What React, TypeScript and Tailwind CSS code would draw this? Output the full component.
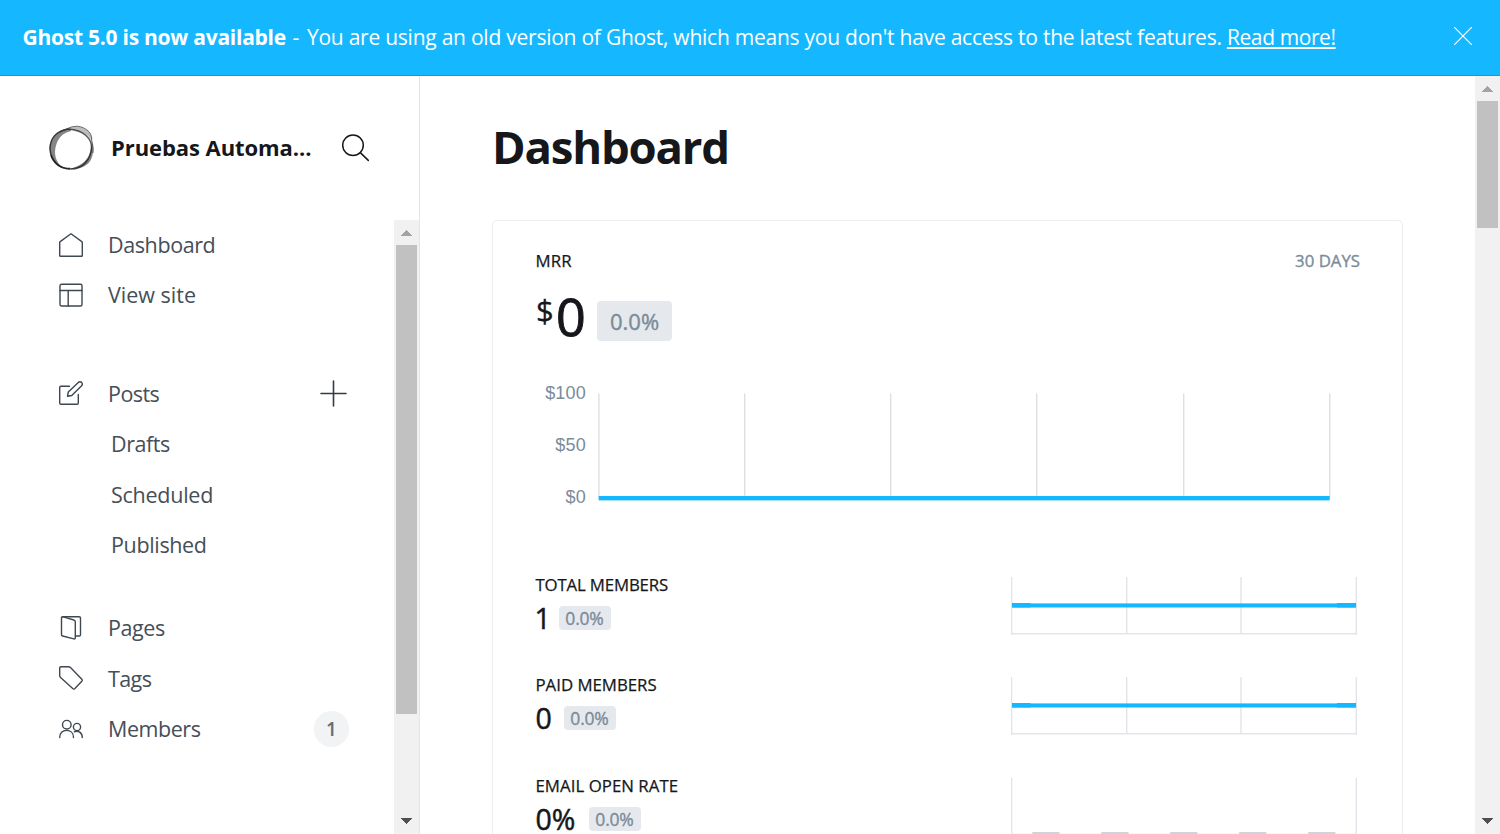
import type { ReactNode } from 'react';

function Icon({ className = '', children }: { className?: string; children: ReactNode }) {
  return (
    <svg
      width="24"
      height="24"
      viewBox="0 0 24 24"
      fill="none"
      stroke="#3f4750"
      strokeWidth="1.4"
      strokeLinecap="round"
      strokeLinejoin="round"
      className={`shrink-0 ${className}`}
    >
      {children}
    </svg>
  );
}

const navText = 'whitespace-nowrap text-[21.5px] leading-[30px] text-[#464e57]';

function NavItem({ icon, label, labelClass, children }: { icon: ReactNode; label: string; labelClass: string; children?: ReactNode }) {
  return (
    <li className="flex h-[50.4px] items-center pl-[59px] pr-[45px]">
      {icon}
      <span className={`ml-[25px] flex-1 ${navText} ${labelClass}`}>{label}</span>
      {children}
    </li>
  );
}

function SubItem({ label, labelClass }: { label: string; labelClass: string }) {
  return (
    <li className="flex h-[50.4px] items-center pl-[111px]">
      <span className={`${navText} ${labelClass}`}>{label}</span>
    </li>
  );
}

function Scrollbar({ className, thumbClass }: { className: string; thumbClass: string }) {
  return (
    <div className={`flex w-[25px] shrink-0 flex-col items-center bg-[#f1f1f1] ${className}`}>
      <svg width="25" height="25" viewBox="0 0 25 25" className="shrink-0" shapeRendering="crispEdges">
        <path d="M7 16h11l-5.5-6z" fill="#a3a3a3" />
      </svg>
      <div className={`w-[21px] shrink-0 bg-[#c1c1c1] ${thumbClass}`} />
      <svg width="25" height="25" viewBox="0 0 25 25" className="mt-auto shrink-0" shapeRendering="crispEdges">
        <path d="M7 9h11l-5.5 6z" fill="#505050" />
      </svg>
    </div>
  );
}

function MiniLineChart() {
  return (
    <svg width="347" height="58" viewBox="0 0 347 58" className="shrink-0">
      <g fill="#e1e4e8">
        <rect x="0" y="0" width="1.3" height="58" />
        <rect x="115" y="0" width="1.4" height="57" />
        <rect x="229.3" y="0" width="1.4" height="57" />
        <rect x="344.6" y="0" width="1.4" height="58" />
        <rect x="0" y="56" width="346" height="1.4" />
      </g>
      <rect x="1" y="26.4" width="344" height="4.1" fill="#15b8ff" />
      <rect x="1" y="26" width="18.5" height="4.5" fill="#15b8ff" />
      <rect x="326" y="26" width="19" height="4.5" fill="#15b8ff" />
    </svg>
  );
}

function MiniBarChart() {
  return (
    <svg width="347" height="58" viewBox="0 0 347 58" className="shrink-0">
      <rect x="0" y="0" width="1.3" height="58" fill="#e1e4e8" />
      <rect x="344.6" y="0" width="1.4" height="58" fill="#e1e4e8" />
      <rect x="1" y="55.4" width="344" height="1" fill="#f0f1f3" />
      {[21.3, 90.3, 159.2, 228.2, 297.2].map((x) => (
        <rect key={x} x={x} y="54" width="27.2" height="3" fill="#ced4d9" />
      ))}
    </svg>
  );
}

function StatRow({ label, labelClass, value, valueClass, chart }: { label: string; labelClass: string; value: string; valueClass: string; chart: ReactNode }) {
  return (
    <section className="flex h-[100.4px] justify-between pl-[42.5px] pr-[44px]">
      <div>
        <h3 className={`h-6 whitespace-nowrap text-[16.8px] leading-6 text-[#15171a] [-webkit-text-stroke:0.25px_#15171a] ${labelClass}`}>{label}</h3>
        <div className="mt-[9px] flex h-6 items-center">
          <span className={`text-[28.5px] leading-6 text-[#15171a] [-webkit-text-stroke:0.5px_#15171a] ${valueClass}`}>{value}</span>
          <span className="flex h-6 w-[52px] items-center justify-center rounded-[4px] bg-[#e5e9ed] pr-[1px] text-[17.5px] leading-6 tracking-[-0.2px] text-[#7c8b9a] [-webkit-text-stroke:0.35px_#7c8b9a]">
            0.0%
          </span>
        </div>
      </div>
      <div className="pt-[4px]">{chart}</div>
    </section>
  );
}

export default function App() {
  return (
    <div className="flex h-[834px] w-[1500px] flex-col overflow-hidden bg-white font-['Open_Sans','Noto_Sans',sans-serif]">
      <header className="flex h-[76px] shrink-0 items-center justify-between border-b border-[#0f9be6] bg-[#15b8ff] pl-[22.5px] pr-[28px] text-white">
        <p className="mb-[1px] whitespace-pre text-[21px] leading-[30px]">
          <b className="tracking-[-0.25px]">Ghost 5.0 is now available</b>
          <span className="tracking-[1.1px]"> - </span>
          <span className="tracking-[-0.24px]">You are using an old version of Ghost, which means you don't have access to the latest features. </span>
          <a className="tracking-[-0.4px] underline decoration-2 underline-offset-2">Read more!</a>
        </p>
        <svg width="18" height="18" viewBox="0 0 18 18" stroke="white" strokeWidth="1.2" className="mb-[3px]">
          <path d="M0 0l18 18M18 0L0 18" />
        </svg>
      </header>

      <div className="flex min-h-0 flex-1">
        <aside className="flex w-[420px] shrink-0 flex-col border-r border-[#e3e6e9]">
          <div className="flex h-[144px] shrink-0 items-center pl-[48px]">
            <svg width="48" height="48" viewBox="0 0 48 48" fill="none" className="shrink-0">
              <path d="M22 4.500C8 5 1.500 15 1.600 25C2 35 8 42 15 44.500C8 38 6 31 7.500 23.500C9.500 15 14 9 23 7z" fill="#333" fillOpacity=".6" />
              <path d="M20 5C24 1.500 32 1.500 38 5.500C42 8 44.500 11 44 18C41 11 35 7 20 5z" fill="#333" fillOpacity=".32" />
              <path d="M44 17C46 24 45.500 33 41.500 38C37 43.500 30 45.500 21 44.800C31 43 38 38 41 31C43 26 43.500 22 44 17z" fill="#333" fillOpacity=".6" />
              <path d="M20 5C9 7 2 14 2 25C2.500 37 12 45 23 45C35 45 43 35 43.500 24C44 15 36 6 20 5z" stroke="#111" strokeOpacity=".7" strokeWidth="1.500" />
              <path d="M12 8C18 5.500 22 2.200 29 2.200C38 3 44 9 43.700 15C43.500 19 46 22 45 29" stroke="#333" strokeOpacity=".7" />
              <path d="M3 31C6 40 13 45 22 44.500" stroke="#111" strokeOpacity=".7" strokeWidth="1.800" />
            </svg>
            <span className="mb-[2px] ml-[15px] w-[203px] whitespace-nowrap text-[22px] leading-[30px] font-bold tracking-[-0.07px] text-[#15171a]">
              Pruebas Automa...
            </span>
            <svg width="28" height="28" viewBox="0 0 28 28" fill="none" stroke="#15171a" strokeWidth="1.5" strokeLinecap="round" className="ml-[28px] shrink-0">
              <circle cx="11" cy="11.300" r="10.300" />
              <path d="M18.300 18.600l8 7.800" />
            </svg>
          </div>
          <div className="flex min-h-0 flex-1">
            <nav className="-mt-[0.2px] min-w-0 flex-1 overflow-hidden">
              <ul>
                <NavItem
                  label="Dashboard"
                  labelClass="tracking-[-0.4px]"
                  icon={<Icon><path d="M.7 9.600Q.7 9 1.200 8.600L11.300 1.200Q12 .8 12.700 1.200L22.800 8.600Q23.300 9 23.300 9.600V22.500Q23.300 23.300 22.500 23.300H1.500Q.7 23.300.7 22.500z" /></Icon>}
                />
                <NavItem
                  label="View site"
                  labelClass="tracking-[0px]"
                  icon={<Icon><rect x="1" y="1.200" width="22" height="21.800" rx="1.500" /><path d="M1 7.500h22M9.200 7.500V23" /></Icon>}
                />
              </ul>
              <ul className="mt-[48px]">
                <NavItem
                  label="Posts"
                  labelClass="tracking-[-0.55px]"
                  icon={
                    <Icon className="mb-[2px]">
                      <path d="M10.500 5.200H2Q.7 5.200.7 6.500V22Q.7 23.300 2 23.300H18Q19.300 23.300 19.300 22V13.500" />
                      <path d="M8.500 15.300L9.300 11L19.300 1.400Q21 .1 22.600 1.400Q24 3 22.600 4.700L12.800 14.500z" />
                    </Icon>
                  }
                >
                  <svg width="28" height="28" viewBox="0 0 28 28" stroke="#343b43" strokeWidth="1.6" strokeLinecap="round" className="mr-[2px] mb-[1px]">
                    <path d="M2 14.500h25M14.500 2v25" />
                  </svg>
                </NavItem>
                <SubItem label="Drafts" labelClass="tracking-[-0.45px]" />
                <SubItem label="Scheduled" labelClass="tracking-[-0.25px]" />
                <SubItem label="Published" labelClass="tracking-[-0.35px]" />
              </ul>
              <ul className="mt-[33px]">
                <NavItem
                  label="Pages"
                  labelClass="tracking-[-0.4px]"
                  icon={
                    <Icon>
                      <path d="M3.600.7L14.800 4Q16.300 4.400 16.300 6V21.800Q16.300 23.200 14.900 22.900L3.600 20Q2.500 19.700 2.500 18.500V1.700Q2.500.7 3.600.7z" />
                      <path d="M3.600.7H20.200Q21.500.7 21.500 2V18.700Q21.500 20 20.200 20H16.500" />
                    </Icon>
                  }
                />
                <NavItem
                  label="Tags"
                  labelClass="tracking-[-0.6px]"
                  icon={<Icon className="mb-[2px]"><path d="M.7 2Q.7.7 2 .7H9.400Q10.600.7 11.500 1.600L22.800 13.200Q23.700 14.200 22.800 15.200L15.700 22.700Q14.700 23.600 13.700 22.600L1.600 11.500Q.7 10.600.7 9.400z" /></Icon>}
                />
                <NavItem
                  label="Members"
                  labelClass="tracking-[-0.45px]"
                  icon={
                    <Icon>
                      <circle cx="7.800" cy="7.700" r="4.300" />
                      <path d="M.7 20.500C.7 16 3.600 13.400 7.500 13.400S14.500 16 14.500 20.500" />
                      <circle cx="18" cy="10" r="3.600" />
                      <path d="M15.300 14.800C19 13.200 23.300 15.500 23.300 20.500" />
                    </Icon>
                  }
                >
                  <span className="flex h-[36px] w-[35px] items-center justify-center rounded-full bg-[#f1f3f4] text-[19px] leading-[26px] font-semibold text-[#626d79]">1</span>
                </NavItem>
              </ul>
            </nav>
            <Scrollbar className="h-full" thumbClass="h-[469px]" />
          </div>
        </aside>

        <main className="min-w-0 flex-1 overflow-hidden pl-[72px] pr-[72px]">
          <h1 className="flex h-[144px] items-center pb-[4px] text-[45.5px] leading-[60px] font-bold tracking-[-1.2px] text-[#15171a]">Dashboard</h1>
          <div className="h-[900px] w-[911px] rounded-[5px] border border-[#ebeef0]">
            <div className="mt-[28px] flex h-6 items-center justify-between pr-[42px] pl-[42.5px] text-[16.8px] leading-6">
              <h3 className="tracking-[0.1px] text-[#15171a] [-webkit-text-stroke:0.25px_#15171a]">MRR</h3>
              <span className="text-[#7c8b9a] [-webkit-text-stroke:0.35px_#7c8b9a]">30 DAYS</span>
            </div>
            <div className="mt-[13px] flex h-[60px] pl-[43px]">
              <span className="-mt-[1px] w-[20px] text-[31px] leading-[50px] text-[#15171a] [-webkit-text-stroke:0.3px_#15171a]">$</span>
              <span className="w-[41px] text-[52px] leading-[60px] text-[#15171a] [-webkit-text-stroke:1px_#15171a]">0</span>
              <span className="mt-[15px] flex h-[40px] w-[75px] items-center justify-center rounded-[4px] bg-[#e5e9ed] text-[22px] leading-[30px] text-[#7c8b9a] [-webkit-text-stroke:0.4px_#7c8b9a]">0.0%</span>
            </div>
            <div className="mt-[37px] flex h-[144px] pl-[42px]">
              <div className="flex w-[51px] flex-col items-end font-['Liberation_Sans',Arial,sans-serif] text-[18px] leading-[20px] tracking-[0.2px] text-[#7c8b9a]">
                <span className="h-[52px] shrink-0">$100</span>
                <span className="h-[52px] shrink-0">$50</span>
                <span className="h-[52px] shrink-0">$0</span>
              </div>
              <svg width="733" height="110" viewBox="0 0 733 110" className="mt-[10px] ml-[12px]">
                <g fill="#dddfe2">
                  {[0.2, 146, 292, 438, 585, 731].map((x) => (
                    <rect key={x} x={x} y="0.5" width="1.400" height="105" />
                  ))}
                </g>
                <rect x="0.700" y="103" width="731" height="4.400" fill="#15b8ff" />
              </svg>
            </div>
            <div className="mt-[46px]">
              <StatRow label="TOTAL MEMBERS" labelClass="tracking-[-0.15px]" value="1" valueClass="w-[23.5px] -ml-[1px] mr-[1px]" chart={<MiniLineChart />} />
              <StatRow label="PAID MEMBERS" labelClass="tracking-[0px]" value="0" valueClass="w-[28.5px]" chart={<MiniLineChart />} />
              <StatRow label="EMAIL OPEN RATE" labelClass="tracking-[0.05px]" value="0%" valueClass="w-[53.5px]" chart={<MiniBarChart />} />
            </div>
          </div>
        </main>
        <Scrollbar className="h-full" thumbClass="h-[127px]" />
      </div>
    </div>
  );
}
